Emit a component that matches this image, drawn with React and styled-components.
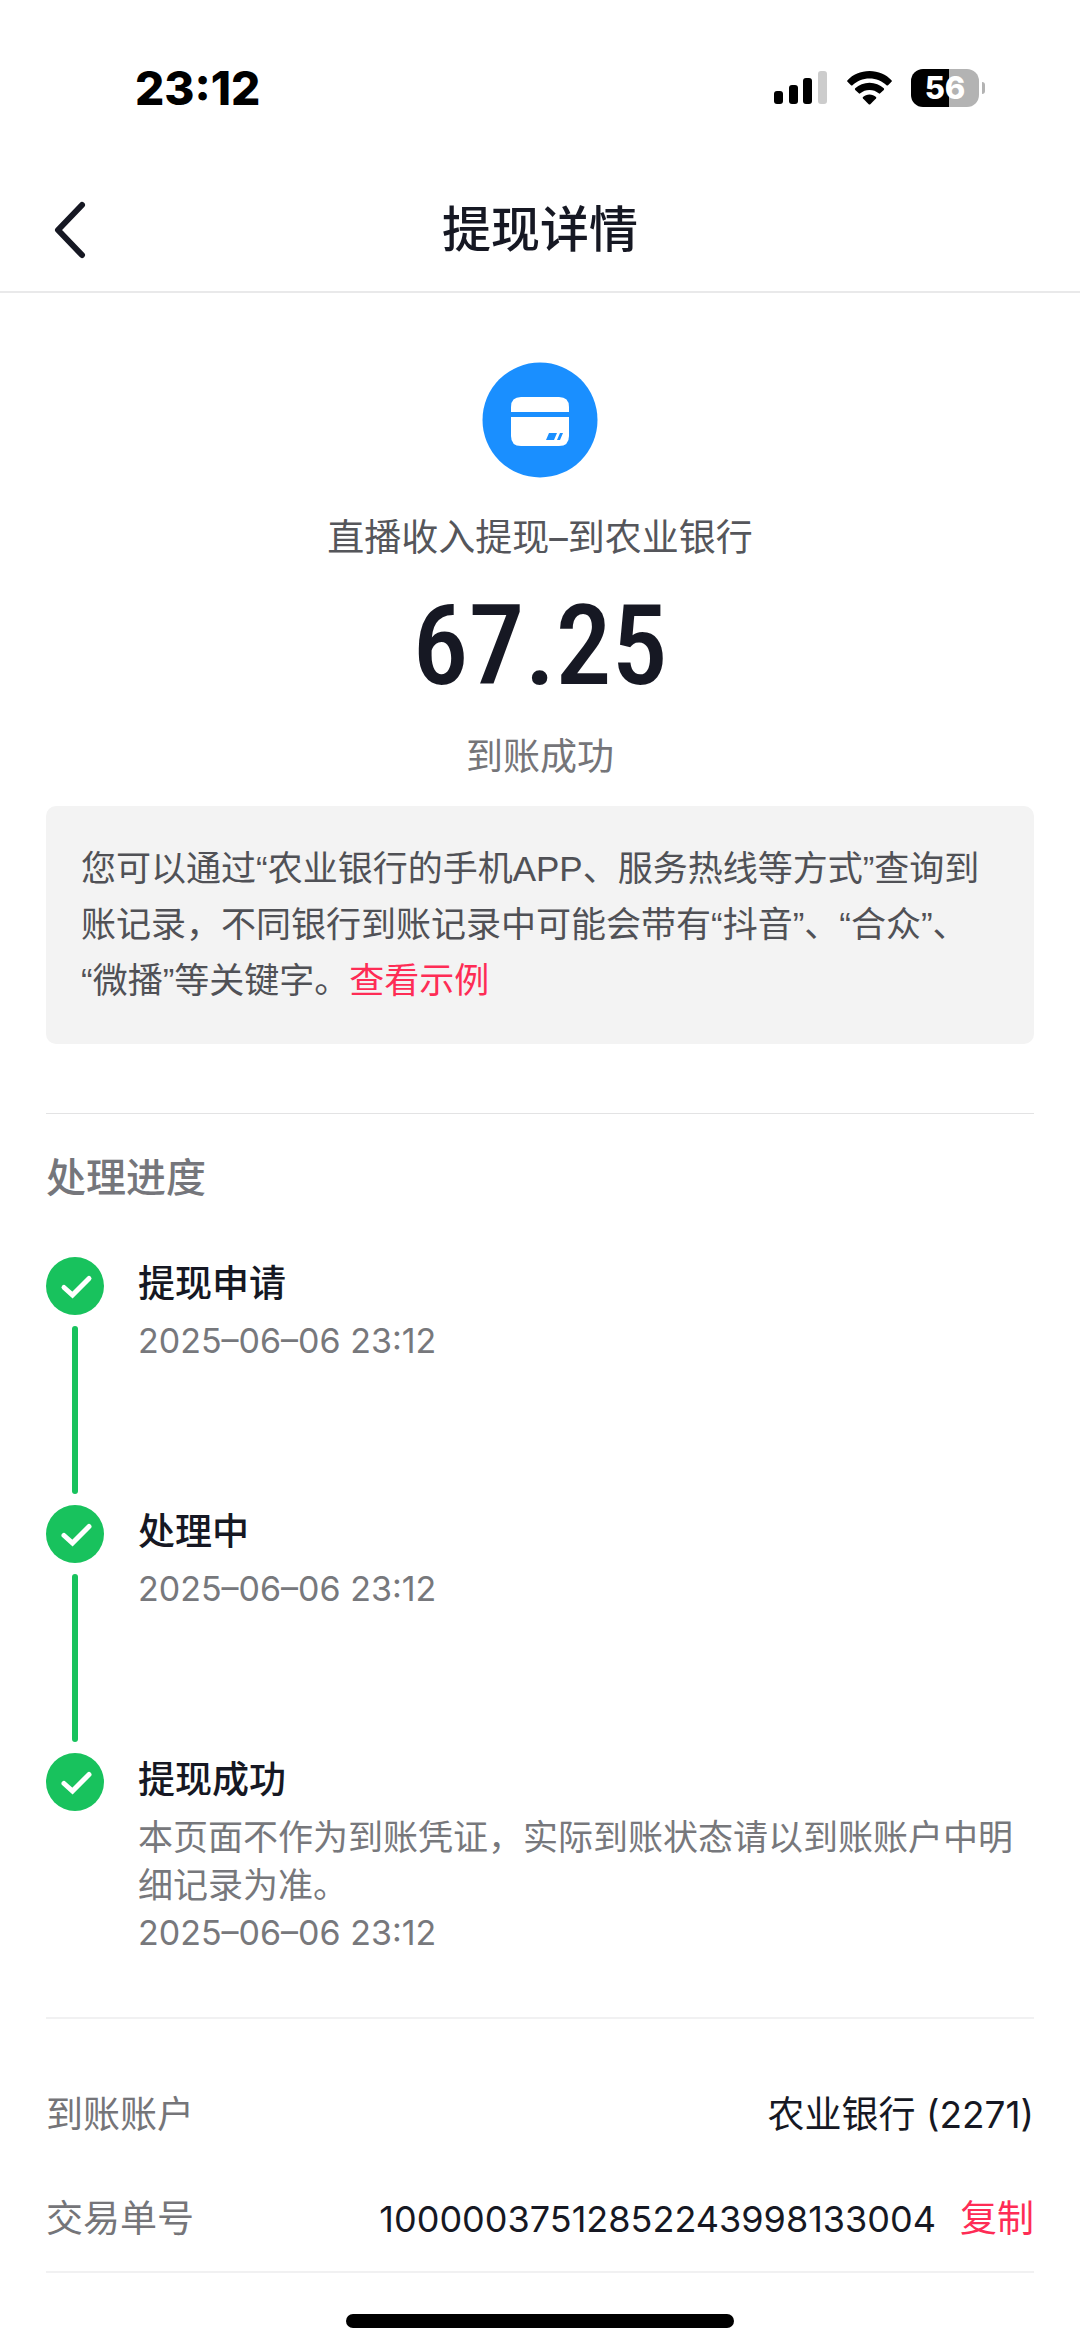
import React from "react";
import styled, { createGlobalStyle } from "styled-components";

const GlobalStyle = createGlobalStyle`
*{
  box-sizing: border-box;
  margin: 0;
  padding: 0;
}

body{
  background: #ffffff;
  color: #161823;
  font-family: Inter, "Noto Sans CJK SC", sans-serif;
}

button{
  border: none;
  background: none;
  font: inherit;
  cursor: pointer;
}
`

const Page = styled.div`
width: 100%;
min-height: 100vh;
display: flex;
flex-direction: column;
`

const StatusBar = styled.div`
display: flex;
justify-content: space-between;
align-items: center;
padding: 64px 95px 56px 135px;
`

const Time = styled.time`
font-size: 46px;
line-height: 48px;
font-weight: 800;
color: #000000;
`

const StatusIcons = styled.div`
display: flex;
align-items: center;
gap: 19px;
`

const Battery = styled.div`
display: flex;
align-items: center;
gap: 3px;
`

const BatteryBody = styled.div`
width: 68px;
height: 38px;
border-radius: 12px;
background: linear-gradient(to right, #000000 ${props => props.$level}%, #b3b3b3 ${props => props.$level}%);
color: #ffffff;
font-size: 31px;
line-height: 38px;
font-weight: 800;
text-align: center;
`

const BatteryCap = styled.div`
width: 3px;
height: 12px;
border-radius: 0 6px 6px 0;
background: #b3b3b3;
`

const Header = styled.header`
display: grid;
grid-template-columns: 96px 1fr 96px;
align-items: center;
height: 125px;
border-bottom: 2px solid #e9e9ea;
`

const BackButton = styled.button`
display: flex;
align-items: center;
height: 96px;
padding-left: 52px;
`

const PageTitle = styled.h1`
font-size: 49px;
line-height: 64px;
font-weight: 500;
text-align: center;
`

const Main = styled.main`
flex: 1;
padding: 0 46px;
`

const Summary = styled.section`
display: flex;
flex-direction: column;
align-items: center;
padding: 69px 0;
border-bottom: 1px solid #e3e3e4;
`

const SummaryText = styled.p`
font-size: 37px;
line-height: 56px;
color: ${props => props.$light ? "#757579" : "#55565b"};
`

const Source = styled(SummaryText)`
margin-top: 32px;
`

const Amount = styled.p`
margin: 16px 0 19px;
font-family: "Roboto Condensed", "Liberation Sans Narrow", Roboto, sans-serif;
font-size: 112px;
line-height: 128px;
font-weight: 500;
`

const Notice = styled.p`
width: 100%;
margin-top: 21px;
padding: 35px;
border-radius: 10px;
background: #f3f3f3;
color: #505156;
font-family: "Liberation Sans", "Noto Sans CJK SC", sans-serif;
font-size: 35px;
line-height: 56px;
`

const NoticeLink = styled.a`
color: #fe2c55;
text-decoration: none;
`

const Progress = styled.section`
padding: 36px 0 60px;
border-bottom: 2px solid #f1f1f2;
`

const SectionTitle = styled.h2`
font-size: 40px;
line-height: 56px;
font-weight: 500;
color: #75767b;
`

const Steps = styled.ol`
margin-top: 51px;
list-style: none;
`

const Step = styled.li`
display: flex;
gap: 34px;
min-height: ${props => props.$last ? "0" : "248px"};
`

const Track = styled.div`
display: flex;
flex-direction: column;
align-items: center;
gap: 11px;
padding-bottom: 11px;
`

const TrackLine = styled.div`
flex: 1;
width: 6px;
border-radius: 3px;
background: #18c25d;
`

const StepBody = styled.div`
flex: 1;
color: #77787c;
font-size: 35px;
line-height: 48px;
`

const StepTitle = styled.h3`
margin-bottom: 6px;
font-size: 37px;
line-height: 54px;
font-weight: 500;
color: #161823;
`

const StepTime = styled.time`
display: block;
font-size: 34px;
`

const Details = styled.dl`
display: flex;
flex-direction: column;
gap: 32px;
padding: 60px 0 16px;
border-bottom: 2px solid #f1f1f2;
`

const DetailRow = styled.div`
display: flex;
justify-content: space-between;
align-items: center;
font-size: 37px;
line-height: 72px;
`

const Label = styled.dt`
color: #757579;
`

const Value = styled.dd`
display: flex;
gap: 24px;
`

const OrderNumber = styled.span`
font-size: 36px;
`

const CopyButton = styled.button`
color: #fe2c55;
`

const HomeArea = styled.footer`
display: flex;
justify-content: center;
padding: 40px 0 20px;
`

const HomeBar = styled.div`
width: 36%;
height: 14px;
border-radius: 7px;
background: #000000;
`

const SignalIcon = () => (
  <svg width="54" height="34" viewBox="0 0 54 34" aria-hidden="true">
    <rect x="0" y="20" width="9" height="13" rx="3" />
    <rect x="15" y="14" width="9" height="19" rx="3" />
    <rect x="29" y="7" width="9" height="26" rx="3" />
    <rect x="44" y="0" width="9" height="33" rx="3" fill="#cccccc" />
  </svg>
)

const WifiIcon = () => (
  <svg width="45" height="34" viewBox="0 0 45 34" aria-hidden="true">
    <path d="M22.500 0C31.500 0 39 3.500 44.500 9.200Q45.200 10 44.500 10.800L41 14.200Q40.300 14.900 39.500 14.200C35 10 29.200 7.400 22.500 7.400S10 10 5.500 14.200Q4.700 14.900 4 14.200L.5 10.800Q-.2 10 .5 9.200C6 3.500 13.500 0 22.500 0Z" />
    <path d="M22.500 11.800C28 11.800 33 13.900 36.800 17.300Q37.500 18.100 36.800 18.900L33.200 22.300Q32.500 23 31.700 22.300C29.200 20.200 26 19 22.500 19S15.800 20.200 13.300 22.300Q12.500 23 11.800 22.300L8.200 18.900Q7.500 18.100 8.200 17.300C12 13.900 17 11.800 22.500 11.800Z" />
    <path d="M22.500 23.500C25 23.500 27.300 24.400 29 25.900Q29.700 26.600 29 27.400L23.300 33.200Q22.500 34 21.700 33.200L16 27.400Q15.300 26.600 16 25.900C17.700 24.400 20 23.500 22.500 23.500Z" />
  </svg>
)

const BackIcon = () => (
  <svg width="36" height="60" viewBox="0 0 36 60" fill="none" stroke="#161823" strokeWidth="6" strokeLinecap="round" strokeLinejoin="round" aria-hidden="true">
    <path d="M30 5L6 30L30 55" />
  </svg>
)

const CardIcon = () => (
  <svg width="116" height="116" viewBox="0 0 116 116" aria-hidden="true">
    <circle cx="58" cy="58" r="57.500" fill="#1a8fff" />
    <path d="M29 50V45Q29 35 39 35H77Q87 35 87 45V50Z" fill="#ffffff" />
    <path d="M29 55H87V74Q87 84 77 84H39Q29 84 29 74Z" fill="#ffffff" />
    <path d="M67 71H75L72 78H64ZM78 71H81L78 78H75Z" fill="#1a8fff" />
  </svg>
)

const CheckIcon = () => (
  <svg width="58" height="58" viewBox="0 0 58 58" aria-hidden="true">
    <circle cx="29" cy="29" r="29" fill="#18c25d" />
    <path d="M18 30.500L26.500 38L43 21.500" fill="none" stroke="#ffffff" strokeWidth="5" strokeLinecap="round" strokeLinejoin="miter" />
  </svg>
)

const steps = [
  { title: "提现申请", time: "2025–06–06 23:12" },
  { title: "处理中", time: "2025–06–06 23:12" },
  {
    title: "提现成功",
    text: "本页面不作为到账凭证，实际到账状态请以到账账户中明细记录为准。",
    time: "2025–06–06 23:12",
  },
]

const App = () => {
    return(
        <Page>
        <GlobalStyle />
        <StatusBar>
            <Time>23:12</Time>
            <StatusIcons>
                <SignalIcon />
                <WifiIcon />
                <Battery>
                    <BatteryBody $level={56}>56</BatteryBody>
                    <BatteryCap />
                </Battery>
            </StatusIcons>
        </StatusBar>
        <Header>
            <BackButton type="button" aria-label="返回">
                <BackIcon />
            </BackButton>
            <PageTitle>提现详情</PageTitle>
        </Header>
        <Main>
            <Summary>
                <CardIcon />
                <Source>直播收入提现–到农业银行</Source>
                <Amount>67.25</Amount>
                <SummaryText $light>到账成功</SummaryText>
                <Notice>
                您可以通过“农业银行的手机APP、服务热线等方式”查询到账记录，不同银行到账记录中可能会带有“抖音”、“合众”、<wbr />“微播”等关键字。<NoticeLink href="#example">查看示例</NoticeLink>
                </Notice>
            </Summary>
            <Progress>
                <SectionTitle>处理进度</SectionTitle>
                <Steps>
                {steps.map((step, i) => {
                    const last = i === steps.length - 1
                    return(
                        <Step key={step.title} $last={last}>
                            <Track>
                                <CheckIcon />
                                {!last && <TrackLine />}
                            </Track>
                            <StepBody>
                                <StepTitle>{step.title}</StepTitle>
                                {step.text && <p>{step.text}</p>}
                                <StepTime>{step.time}</StepTime>
                            </StepBody>
                        </Step>
                    )
                })}
                </Steps>
            </Progress>
            <Details>
                <DetailRow>
                    <Label>到账账户</Label>
                    <Value>农业银行 (2271)</Value>
                </DetailRow>
                <DetailRow>
                    <Label>交易单号</Label>
                    <Value>
                        <OrderNumber>10000037512852243998133004</OrderNumber>
                        <CopyButton type="button">复制</CopyButton>
                    </Value>
                </DetailRow>
            </Details>
        </Main>
        <HomeArea>
            <HomeBar />
        </HomeArea>
    </Page>
    )
}

export default App;
